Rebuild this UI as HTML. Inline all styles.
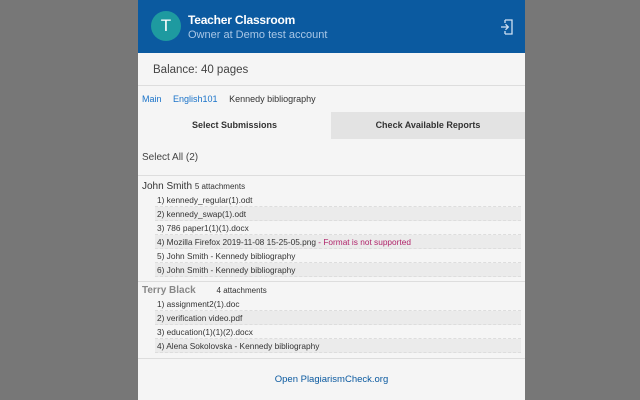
<!DOCTYPE html>
<html><head><meta charset="utf-8"><style>
*{margin:0;padding:0;box-sizing:border-box}
body{width:640px;height:400px;background:#777;font-family:"Liberation Sans",sans-serif;overflow:hidden;position:relative}
.p{position:absolute;left:138px;top:0;width:387px;height:400px;background:#f5f5f5}
.hd{height:53px;background:#0b5aa0;position:relative}
.av{position:absolute;left:13px;top:11px;width:30px;height:30px;border-radius:50%;background:#1e9aa0;color:#fff;font-size:17px;text-align:center;line-height:30px}
.t1{position:absolute;left:50px;top:13px;color:#fff;font-size:12px;font-weight:bold;letter-spacing:-0.2px}
.t2{position:absolute;left:50px;top:29px;color:#a9c7e6;font-size:11px}
.ic{position:absolute;left:362px;top:19px}
.bal{position:absolute;top:64px;left:15px;font-size:11.5px;color:#444}
.l1{position:absolute;top:85px;left:0;width:387px;border-top:1px solid #ddd}
.bc{position:absolute;top:94px;left:4px;font-size:9px;color:#333}
.bc a{color:#1a73c9;text-decoration:none;margin-right:9px}
.tabs{position:absolute;top:112px;left:0;width:387px;height:28px;font-size:9px;font-weight:bold;color:#333}
.tabs div{position:absolute;top:0;height:27px;line-height:27px;text-align:center}
.sa{position:absolute;top:152px;left:4px;font-size:10px;color:#444}
.l{position:absolute;left:0;width:387px;border-top:1px solid #ddd}
.nm{position:absolute;left:4px;font-size:10px;color:#333}
.nm small{font-size:8px}
.it{position:absolute;left:17px;width:366px;height:14px;line-height:14px;font-size:8.3px;color:#333;padding-left:2px;border-bottom:1px dashed #ddd}
.it.s{background:#ebebeb}
.lk{position:absolute;top:374px;left:0;width:387px;text-align:center;font-size:9.5px;color:#0b5aa0}
</style></head><body><div class="p">
<div class="hd"><div class="av">T</div><div class="t1">Teacher Classroom</div><div class="t2">Owner at Demo test account</div>
<svg class="ic" width="14" height="16" viewBox="0 0 14 16" fill="none" stroke="#cfe0f2" stroke-width="1.3"><path d="M5 1h7v14H5M5 1v3M5 15v-3"/><path d="M1 8h7M5.5 5.2L8.3 8 5.5 10.8"/></svg></div>
<div class="bal">Balance: 40 pages</div>
<div class="l1"></div>
<div class="bc"><a>Main</a> <a>English101</a> Kennedy bibliography</div>
<div class="tabs"><div style="left:0;width:193px;background:#f5f5f5">Select Submissions</div><div style="left:193px;width:194px;background:#e3e3e3">Check Available Reports</div></div>
<div class="sa">Select All (2)</div>
<div class="l" style="top:175px"></div>
<div class="nm" style="top:181px">John Smith <small>5 attachments</small></div>
<div class="it" style="top:193px">1) kennedy_regular(1).odt</div>
<div class="it s" style="top:207px">2) kennedy_swap(1).odt</div>
<div class="it" style="top:221px">3) 786 paper1(1)(1).docx</div>
<div class="it s" style="top:235px">4) Mozilla Firefox 2019-11-08 15-25-05.png <span style="color:#b0246a">- Format is not supported</span></div>
<div class="it" style="top:249px">5) John Smith - Kennedy bibliography</div>
<div class="it s" style="top:263px">6) John Smith - Kennedy bibliography</div>
<div class="l" style="top:281px"></div>
<div class="nm" style="top:285px;color:#888;font-weight:bold">Terry Black <small style="color:#333;font-weight:normal;margin-left:18px">4 attachments</small></div>
<div class="it" style="top:297px">1) assignment2(1).doc</div>
<div class="it s" style="top:311px">2) verification video.pdf</div>
<div class="it" style="top:325px">3) education(1)(1)(2).docx</div>
<div class="it s" style="top:339px">4) Alena Sokolovska - Kennedy bibliography</div>
<div class="l" style="top:358px"></div>
<div class="lk">Open PlagiarismCheck.org</div>
</div></body></html>
